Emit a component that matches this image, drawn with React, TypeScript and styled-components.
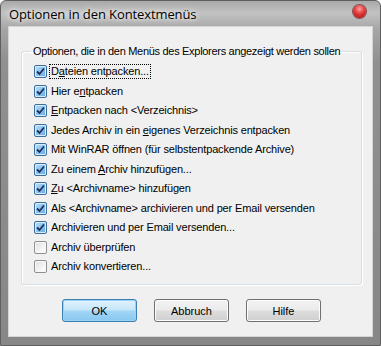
import styled, { createGlobalStyle } from "styled-components";

const GlobalStyle = createGlobalStyle`
  html, body {
    margin: 0;
    padding: 0;
    background: #ffffff;
  }
  body {
    font-family: "Liberation Sans", Arial, sans-serif;
  }
`;

const Window = styled.div`
  width: 381px;
  height: 346px;
  box-sizing: border-box;
  display: flex;
  flex-direction: column;
  background: linear-gradient(180deg, #a9a9a9 0px, #c2c2c2 12px, #a6a6a6 28px, #909090 60px, #878787 100%);
  border: 1px solid #5f5f5f;
  border-radius: 6px 6px 0 0;
  padding: 0 7px 8px 7px;
`;

const TitleBar = styled.div`
  height: 25px;
  display: flex;
  align-items: center;
  justify-content: space-between;
  padding-left: 1px;
`;

const Title = styled.span`
  font-family: "Open Sans", "Liberation Sans", sans-serif;
  font-size: 13px;
  letter-spacing: -0.1px;
  color: #000;
  text-shadow: 0 0 8px #ffffff, 0 0 4px #ffffff;
`;

const CloseDot = styled.div`
  width: 13px;
  height: 13px;
  border-radius: 50%;
  margin-right: 7px;
  margin-top: -4px;
  background: radial-gradient(circle at 50% 30%, #ff9e9e 0%, #e03a3a 45%, #a10b0b 100%);
  box-shadow: 0 0 0 1px #8a4a4a;
`;

const Client = styled.div`
  flex: 1;
  background: #f0f0f0;
  border: 1px solid #d4d4d4;
  display: flex;
  flex-direction: column;
  padding: 18px 10px 0 12px;
`;

const Group = styled.fieldset`
  margin: 0;
  padding: 5px 0 11px 12px;
  height: 240px;
  box-sizing: border-box;
  border: 1px solid #d5dfe5;
  box-shadow: inset 1px 1px 0 #ffffff, 1px 1px 0 #ffffff;
  border-radius: 3px;
`;

const Legend = styled.legend`
  font-size: 11px;
  color: #000;
  padding: 0 2px;
  margin-left: -3px;
  letter-spacing: -0.3px;
`;

const Row = styled.div`
  height: 19.5px;
  display: flex;
  align-items: center;
  gap: 3px;
  font-size: 11px;
  color: #000;
  letter-spacing: -0.15px;
`;

const Box = styled.span<{ $checked: boolean }>`
  width: 13px;
  height: 13px;
  box-sizing: border-box;
  border-radius: 2px;
  display: flex;
  align-items: center;
  justify-content: center;
  border: 1px solid ${(p) => (p.$checked ? "#3c6e9c" : "#8e8f8f")};
  background: ${(p) =>
    p.$checked
      ? "linear-gradient(135deg, #bfe0fa 0%, #8ec4ef 45%, #6aa9e0 100%)"
      : "linear-gradient(135deg, #dedede 0%, #f4f4f4 60%, #ffffff 100%)"};
  box-shadow: inset 0 0 0 1px ${(p) => (p.$checked ? "#d8ecfb" : "#f8f8f8")};
`;

const Label = styled.span<{ $focus?: boolean }>`
  padding: 0 1px;
  outline: ${(p) => (p.$focus ? "1px dotted #000" : "none")};
  line-height: 13px;
`;

const ButtonRow = styled.div`
  display: flex;
  gap: 17px;
  padding: 14px 0 0 41px;
`;

const Button = styled.button<{ $default?: boolean }>`
  width: 75px;
  height: 23px;
  box-sizing: border-box;
  font-family: "Liberation Sans", Arial, sans-serif;
  font-size: 11px;
  color: #000;
  border-radius: 3px;
  border: 1px solid ${(p) => (p.$default ? "#3c7fb1" : "#707070")};
  background: ${(p) =>
    p.$default
      ? "linear-gradient(180deg, #e3f3fd 0%, #c4e5f9 48%, #a3d6f6 52%, #87c7f0 100%)"
      : "linear-gradient(180deg, #f2f2f2 0%, #ebebeb 48%, #dddddd 52%, #cfcfcf 100%)"};
  box-shadow: inset 0 0 0 1px ${(p) => (p.$default ? "#9cd3f5" : "#fcfcfc")};
  padding: 0;
`;

const Check = () => (
  <svg width="9" height="9" viewBox="0 0 9 9">
    <path d="M1 4.5 L3.5 7 L8 1.5" fill="none" stroke="#1f2f5a" strokeWidth="1.8" />
  </svg>
);

type Item = { checked: boolean; label: React.ReactNode; focus?: boolean };

const items: Item[] = [
  { checked: true, focus: true, label: <>D<u>a</u>teien entpacken...</> },
  { checked: true, label: <>Hier e<u>n</u>tpacken</> },
  { checked: true, label: <><u>E</u>ntpacken nach &lt;Verzeichnis&gt;</> },
  { checked: true, label: <>Jedes Archiv in ein <u>e</u>igenes Verzeichnis entpacken</> },
  { checked: true, label: "Mit WinRAR öffnen (für selbstentpackende Archive)" },
  { checked: true, label: <>Zu einem <u>A</u>rchiv hinzufügen...</> },
  { checked: true, label: <><u>Z</u>u &lt;Archivname&gt; hinzufügen</> },
  { checked: true, label: "Als <Archivname> archivieren und per Email versenden" },
  { checked: true, label: "Archivieren und per Email versenden..." },
  { checked: false, label: "Archiv überprüfen" },
  { checked: false, label: "Archiv konvertieren..." },
];

export default function App() {
  return (
    <>
      <GlobalStyle />
      <Window>
        <TitleBar>
          <Title>Optionen in den Kontextmenüs</Title>
          <CloseDot />
        </TitleBar>
        <Client>
          <Group>
            <Legend>Optionen, die in den Menüs des Explorers angezeigt werden sollen</Legend>
            {items.map((it, i) => (
              <Row key={i}>
                <Box $checked={it.checked}>{it.checked && <Check />}</Box>
                <Label $focus={it.focus}>{it.label}</Label>
              </Row>
            ))}
          </Group>
          <ButtonRow>
            <Button $default>OK</Button>
            <Button>Abbruch</Button>
            <Button>Hilfe</Button>
          </ButtonRow>
        </Client>
      </Window>
    </>
  );
}
